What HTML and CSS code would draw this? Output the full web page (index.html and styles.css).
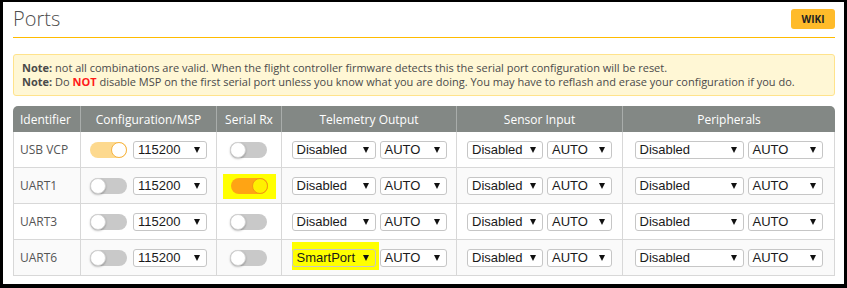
FILE: index.html
```html
<!DOCTYPE html>
<html>
<head>
    <title>Ports</title>
    <link rel="stylesheet" href="styles.css">
</head>
<body>
    <div class="frame">
        <div class="title-bar">
            <h1>Ports</h1>
            <a class="wiki">WIKI</a>
        </div>
        <div class="note">
            <p><b>Note:</b> not all combinations are valid. When the flight controller firmware detects this the serial port configuration will be reset.</p>
            <p><b>Note:</b> Do <b class="red">NOT</b> disable MSP on the first serial port unless you know what you are doing. You may have to reflash and erase your configuration if you do.</p>
        </div>
        <table class="ports">
            <colgroup>
                <col style="width:68px">
                <col style="width:136px">
                <col style="width:65px">
                <col style="width:175px">
                <col style="width:166px">
                <col style="width:212px">
            </colgroup>
            <thead>
                <tr>
                    <th class="ident">Identifier</th>
                    <th>Configuration/MSP</th>
                    <th>Serial Rx</th>
                    <th>Telemetry Output</th>
                    <th>Sensor Input</th>
                    <th>Peripherals</th>
                </tr>
            </thead>
            <tbody>
                <tr>
                    <td>USB VCP</td>
                    <td><div class="cell"><span class="switch on"><span class="knob"></span></span><span class="select baud">115200</span></div></td>
                    <td><div class="cell"><span class="switch"><span class="knob"></span></span></div></td>
                    <td><div class="cell"><span class="select tel">Disabled</span><span class="select auto-t">AUTO</span></div></td>
                    <td><div class="cell"><span class="select sen">Disabled</span><span class="select auto-s">AUTO</span></div></td>
                    <td><div class="cell"><span class="select per">Disabled</span><span class="select auto-p">AUTO</span></div></td>
                </tr>
                <tr>
                    <td>UART1</td>
                    <td><div class="cell"><span class="switch"><span class="knob"></span></span><span class="select baud">115200</span></div></td>
                    <td><div class="cell"><span class="mark mark-rx"><span class="switch hot"><span class="knob"></span></span></span></div></td>
                    <td><div class="cell"><span class="select tel">Disabled</span><span class="select auto-t">AUTO</span></div></td>
                    <td><div class="cell"><span class="select sen">Disabled</span><span class="select auto-s">AUTO</span></div></td>
                    <td><div class="cell"><span class="select per">Disabled</span><span class="select auto-p">AUTO</span></div></td>
                </tr>
                <tr>
                    <td>UART3</td>
                    <td><div class="cell"><span class="switch"><span class="knob"></span></span><span class="select baud">115200</span></div></td>
                    <td><div class="cell"><span class="switch"><span class="knob"></span></span></div></td>
                    <td><div class="cell"><span class="select tel">Disabled</span><span class="select auto-t">AUTO</span></div></td>
                    <td><div class="cell"><span class="select sen">Disabled</span><span class="select auto-s">AUTO</span></div></td>
                    <td><div class="cell"><span class="select per">Disabled</span><span class="select auto-p">AUTO</span></div></td>
                </tr>
                <tr>
                    <td>UART6</td>
                    <td><div class="cell"><span class="switch"><span class="knob"></span></span><span class="select baud">115200</span></div></td>
                    <td><div class="cell"><span class="switch"><span class="knob"></span></span></div></td>
                    <td><div class="cell"><span class="mark mark-sp"><span class="select tel yellow">SmartPort</span></span><span class="select auto-t">AUTO</span></div></td>
                    <td><div class="cell"><span class="select sen">Disabled</span><span class="select auto-s">AUTO</span></div></td>
                    <td><div class="cell"><span class="select per">Disabled</span><span class="select auto-p">AUTO</span></div></td>
                </tr>
            </tbody>
        </table>
    </div>
</body>
</html>
```

FILE: styles.css
```css
body {
    margin: 0;
    background-color: #000;
    font-family: "Open Sans", sans-serif;
}

.frame {
    margin: 2px 3px 0 3px;
    height: 282px;
    box-sizing: border-box;
    background-color: #fff;
    padding: 7px 9px 0 10px;
}

.title-bar {
    display: flex;
    justify-content: space-between;
    align-items: center;
    padding-bottom: 8px;
    border-bottom: 1px solid #ffbb00;
}

h1 {
    margin: 0;
    font-size: 20px;
    font-weight: 300;
    line-height: 20px;
    color: #4d4d4d;
}

.wiki {
    width: 44px;
    height: 20px;
    line-height: 20px;
    text-align: center;
    background-color: #ffbb2a;
    border-radius: 3px;
    font-size: 10px;
    font-weight: bold;
    color: #222;
}

.note {
    margin-top: 16px;
    background-color: #fff7d5;
    border: 1px solid #ffe38c;
    border-radius: 3px;
    padding: 6px 8px;
    font-size: 11px;
    line-height: 14px;
    color: #4a4a4a;
}

.note p {
    margin: 0;
}

.red {
    color: #ff1a1a;
}

.ports {
    margin-top: 10px;
    width: 100%;
    table-layout: fixed;
    border-collapse: separate;
    border-spacing: 0;
    font-size: 12px;
    color: #555;
}

.ports th {
    height: 26px;
    padding: 0;
    background-color: #838885;
    color: #fff;
    font-weight: normal;
    border-right: 1px solid #a9adab;
}

.ports th:first-child {
    border-top-left-radius: 5px;
}

.ports th:last-child {
    border-right: none;
    border-top-right-radius: 5px;
}

.ports th.ident {
    text-align: left;
    padding-left: 7px;
}

.ports td {
    height: 36px;
    box-sizing: border-box;
    padding: 0;
    border-right: 1px solid #d8d8d8;
    border-bottom: 1px solid #d8d8d8;
}

.ports td:first-child {
    border-left: 1px solid #d8d8d8;
    padding-left: 6px;
}

.ports tbody tr:nth-child(even) td {
    background-color: #fafafa;
}

.cell {
    display: flex;
    align-items: center;
    justify-content: center;
    gap: 4px;
}

.switch {
    display: flex;
    justify-content: flex-start;
    width: 37px;
    height: 16px;
    border-radius: 8px;
    background-color: #c9c9c9;
    margin-right: 2px;
}

.knob {
    width: 16px;
    height: 16px;
    box-sizing: border-box;
    border-radius: 50%;
    background-color: #fff;
    border: 1px solid #d2d2d2;
    box-shadow: 0 1px 2px rgba(0, 0, 0, 0.25);
}

.switch.on {
    justify-content: flex-end;
    background-color: #fdd98e;
}

.switch.on .knob {
    border-color: #f6b443;
    box-shadow: none;
}

.switch.hot {
    justify-content: flex-end;
    background-color: #ffa414;
    margin-right: 0;
}

.switch.hot .knob {
    background-color: #fff000;
    border-color: #f29a10;
    box-shadow: none;
}

.select {
    display: flex;
    align-items: center;
    justify-content: space-between;
    height: 18px;
    box-sizing: border-box;
    padding: 0 6px 0 4px;
    border: 1px solid #c6c6c6;
    border-radius: 3px;
    background-color: #fff;
    font-family: "Liberation Sans", Arial, sans-serif;
    font-size: 13px;
    color: #1a1a1a;
}

.select::after {
    content: "";
    border-left: 3px solid transparent;
    border-right: 3px solid transparent;
    border-top: 6px solid #111;
}

.select.yellow {
    background-color: #ffff00;
}

.baud { width: 74px; }
.tel { width: 84px; }
.auto-t { width: 67px; }
.sen { width: 76px; }
.auto-s { width: 65px; }
.per { width: 109px; }
.auto-p { width: 75px; }

/* highlighter marks drawn over the screenshot */
.mark {
    position: relative;
    isolation: isolate;
    display: flex;
}

.mark::before {
    content: "";
    position: absolute;
    background-color: #ffff00;
    z-index: -1;
}

.mark-rx::before {
    top: -4px;
    bottom: -5px;
    left: -8px;
    right: -8px;
}

.mark-sp::before {
    top: -7px;
    bottom: -3px;
    left: 0;
    right: -3px;
}
```
